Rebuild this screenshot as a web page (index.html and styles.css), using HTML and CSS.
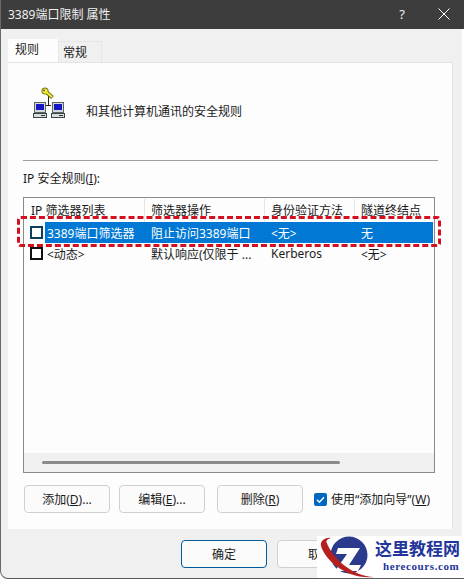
FILE: index.html
```html
<!DOCTYPE html>
<html lang="zh-CN">
<head>
  <meta charset="UTF-8" />
  <title>3389端口限制 属性</title>
  <link rel="stylesheet" href="styles.css">
</head>
<body>
  <div class="dialog">
    <div class="titlebar">
      <span class="title">3389端口限制 属性</span>
      <span class="help">?</span>
      <svg class="close" width="12" height="12" viewBox="0 0 12 12"><path d="M0.5 0.5L11.5 11.5M11.5 0.5L0.5 11.5" stroke="#fff" stroke-width="1" fill="none"/></svg>
    </div>

    <div class="tabs">
      <div class="tab active">规则</div>
      <div class="tab">常规</div>
    </div>

    <div class="panel">
      <div class="intro">
        <svg class="rule-icon" width="32" height="32" viewBox="0 0 32 32" shape-rendering="crispEdges">
          <!-- connector -->
          <path d="M15.5 9v10M13 18.5h5" stroke="#222" stroke-width="1" fill="none"/>
          <!-- key -->
          <g shape-rendering="auto">
            <path d="M12 4L19.5 10.5" stroke="#77720c" stroke-width="4" fill="none"/>
            <circle cx="12" cy="4" r="3.6" fill="#77720c"/>
            <path d="M12 4L19 10" stroke="#f2ea3c" stroke-width="2" fill="none"/>
            <circle cx="12" cy="4" r="2.6" fill="#f2ea3c"/>
            <circle cx="11" cy="3.4" r="0.9" fill="#555"/>
          </g>
          <!-- left computer -->
          <rect x="1" y="15" width="12" height="11" fill="#5a6464"/>
          <rect x="2" y="16" width="10" height="9" fill="#d4dada"/>
          <rect x="3" y="17" width="8" height="6" fill="#1616c4"/>
          <rect x="0" y="26" width="14" height="5" fill="#3c4444"/>
          <rect x="1" y="27" width="12" height="3" fill="#d8dddd"/>
          <rect x="8" y="28" width="4" height="1" fill="#333"/>
          <!-- right computer -->
          <rect x="19" y="15" width="12" height="11" fill="#5a6464"/>
          <rect x="20" y="16" width="10" height="9" fill="#d4dada"/>
          <rect x="21" y="17" width="8" height="6" fill="#1616c4"/>
          <rect x="18" y="26" width="14" height="5" fill="#3c4444"/>
          <rect x="19" y="27" width="12" height="3" fill="#d8dddd"/>
          <rect x="26" y="28" width="4" height="1" fill="#333"/>
        </svg>
        <span class="intro-text">和其他计算机通讯的安全规则</span>
      </div>

      <div class="separator"></div>

      <div class="list-label">IP 安全规则(<u>I</u>):</div>

      <div class="list">
        <div class="list-row list-head">
          <div class="cell">IP 筛选器列表</div>
          <div class="cell">筛选器操作</div>
          <div class="cell">身份验证方法</div>
          <div class="cell">隧道终结点</div>
        </div>
        <div class="list-row rule selected">
          <span class="box"></span>
          <div class="cell-group">
            <div class="cell first">3389端口筛选器</div>
            <div class="cell">阻止访问3389端口</div>
            <div class="cell">&lt;无&gt;</div>
            <div class="cell">无</div>
          </div>
        </div>
        <div class="list-row rule">
          <span class="box"></span>
          <div class="cell-group">
            <div class="cell first">&lt;动态&gt;</div>
            <div class="cell">默认响应(仅限于 ...</div>
            <div class="cell">Kerberos</div>
            <div class="cell">&lt;无&gt;</div>
          </div>
        </div>
        <div class="list-space"></div>
        <div class="scrollbar"><div class="thumb"></div></div>
        <div class="highlight"></div>
      </div>

      <div class="actions">
        <button class="btn">添加(<u>D</u>)...</button>
        <button class="btn">编辑(<u>E</u>)...</button>
        <button class="btn">删除(<u>R</u>)</button>
        <label class="wizard">
          <span class="check">
            <svg width="13" height="13" viewBox="0 0 13 13"><path d="M3 6.8L5.4 9.2L10 4.2" stroke="#fff" stroke-width="1.4" fill="none"/></svg>
          </span>
          使用“添加向导”(<u>W</u>)
        </label>
      </div>
    </div>

    <div class="footer">
      <button class="btn primary">确定</button>
      <button class="btn">取消</button>
    </div>

    <div class="watermark">
      <svg class="wm-logo" width="58" height="43" viewBox="0 0 58 43">
        <circle cx="32" cy="19" r="18.5" fill="#2b3a8c"/>
        <path d="M21 12H43L32 29H44L41 35H18L30 18H19z" fill="#fff"/>
        <path d="M4 10C8 24 30 44 57 41C36 40 16 24 9 5z" fill="#b5201f"/>
        <path d="M4 10C3 5 8 1 14 2C10 3 8 6 9 9z" fill="#b5201f"/>
      </svg>
      <div class="wm-text">
        <div class="wm-name">这里教程网</div>
        <div class="wm-url">herecours.com</div>
      </div>
    </div>
  </div>
</body>
</html>
```

FILE: styles.css
```css
html, body {
  margin: 0;
  padding: 0;
  background-color: #fff;
}
body {
  font-family: "Noto Sans", "Noto Sans CJK SC", sans-serif;
  font-size: 12px;
  color: #1a1a1a;
  width: 464px;
  height: 579px;
  overflow: hidden;
}
.dialog {
  position: relative;
  box-sizing: border-box;
  width: 464px;
  height: 579px;
  background: linear-gradient(to left, #fff 2px, #f0f0f0 2px);
  border-left: 1px solid #6a6a6a;
  border-bottom: 1px solid #5a5a5a;
  border-bottom-left-radius: 8px;
  overflow: hidden;
}
.titlebar {
  display: flex;
  align-items: center;
  height: 29px;
  padding: 0 14px 2px 7px;
  box-sizing: border-box;
  background-color: #3d3d3d;
  color: #f0f0f0;
}
.title {
  flex: 1;
}
.help {
  margin-right: 33px;
  font-size: 13px;
}
.tabs {
  display: flex;
  align-items: flex-end;
  height: 23px;
  margin: 10px 0 0 7px;
}
.tab {
  width: 44px;
  height: 21px;
  line-height: 21px;
  padding-right: 10px;
  text-align: center;
  background-color: #f0f0f0;
  border: 1px solid #e6e6e6;
  border-bottom: none;
  box-sizing: border-box;
}
.tab.active {
  width: 50px;
  height: 23px;
  line-height: 19px;
  background-color: #fdfdfd;
  border-color: #fdfdfd;
  padding-right: 12px;
}
.panel {
  box-sizing: border-box;
  width: 445px;
  height: 467px;
  margin-left: 7px;
  padding: 0 14px 0 15px;
  background-color: #fdfdfd;
  border-top: 1px solid #e4e4e4;
  border-right: 1px solid #e4e4e4;
}
.intro {
  display: flex;
  align-items: flex-start;
  height: 97px;
  padding: 24px 0 0 10px;
  box-sizing: border-box;
}
.rule-icon {
  flex: none;
}
.intro-text {
  margin: 15px 0 0 21px;
}
.separator {
  height: 1px;
  background-color: #a0a0a0;
}
.list-label {
  margin-top: 9px;
  height: 27px;
  line-height: 18px;
}
.list {
  position: relative;
  display: flex;
  flex-direction: column;
  box-sizing: border-box;
  width: 412px;
  height: 276px;
  background-color: #fdfdfd;
  border: 1px solid #8a8a8a;
}
.list-row {
  display: flex;
  align-items: center;
}
.list-head {
  height: 24px;
  padding-top: 1px;
  box-sizing: border-box;
}
.list-head .cell {
  border-right: 1px solid #e5e5e5;
  line-height: 23px;
  height: 23px;
  padding-top: 0;
}
.cell {
  box-sizing: border-box;
  flex: none;
  padding-left: 6px;
  white-space: nowrap;
  overflow: hidden;
}
.list-head .cell:nth-child(1) { width: 121px; padding-left: 7px; }
.list-head .cell:nth-child(2) { width: 120px; }
.list-head .cell:nth-child(3) { width: 90px; }
.list-head .cell:nth-child(4) { width: 78px; border-right: none; }
.rule {
  height: 21px;
}
.box {
  flex: none;
  box-sizing: border-box;
  width: 13px;
  height: 13px;
  margin-left: 6px;
  border: 2px solid #111;
  background-color: #fff;
}
.selected .box {
  border-color: #0f3f5f;
}
.cell-group {
  display: flex;
  align-items: center;
  flex: 1;
  height: 21px;
  margin: 0 1px 0 2px;
}
.selected .cell-group {
  background-color: #0078d4;
  color: #fff;
}
.cell-group .cell:nth-child(1) { width: 100px; padding-left: 2px; }
.cell-group .cell:nth-child(2) { width: 120px; }
.cell-group .cell:nth-child(3) { width: 90px; }
.cell-group .cell:nth-child(4) { width: 68px; }
.list-space {
  flex: 1;
}
.scrollbar {
  display: flex;
  align-items: center;
  height: 19px;
  padding-left: 18px;
  background-color: #f0f0f0;
}
.thumb {
  width: 298px;
  height: 3px;
  background-color: #8a8a8a;
  border-radius: 2px;
}
/* red dashed annotation drawn over the first row */
.highlight {
  position: absolute;
  left: -7px;
  top: 18px;
  width: 424px;
  height: 31px;
  box-sizing: border-box;
  border: 3px dashed #d40f1e;
  border-radius: 4px;
}
.actions {
  display: flex;
  align-items: center;
  margin-top: 12px;
  padding-left: 1px;
}
.btn {
  box-sizing: border-box;
  width: 86px;
  height: 28px;
  padding: 0;
  font-family: inherit;
  font-size: 12px;
  color: #1a1a1a;
  background-color: #fbfbfb;
  border: 1px solid #d0d0d0;
  border-radius: 4px;
}
.actions .btn {
  margin-right: 9px;
}
.actions .btn:nth-child(3) {
  margin-left: 3px;
  margin-right: 11px;
}
.wizard {
  display: flex;
  align-items: center;
  white-space: nowrap;
}
.check {
  display: block;
  width: 13px;
  height: 13px;
  margin-right: 4px;
  background-color: #0067c0;
  border-radius: 2px;
}
.check svg {
  display: block;
}
.footer {
  display: flex;
  gap: 10px;
  margin-top: 11px;
  padding-left: 180px;
}
.primary {
  border: 1px solid #005a9e;
}
.watermark {
  position: absolute;
  left: 316px;
  top: 536px;
  display: flex;
  width: 147px;
  height: 43px;
  background-color: #fff;
}
.wm-logo {
  flex: none;
}
.wm-text {
  white-space: nowrap;
  margin-top: 1px;
}
.wm-name {
  font-family: "Noto Sans CJK SC", sans-serif;
  font-weight: 700;
  font-size: 17px;
  line-height: 22px;
  color: #23359a;
}
.wm-url {
  margin-left: 8px;
  font-family: "Liberation Serif", serif;
  font-weight: 700;
  font-size: 11px;
  line-height: 14px;
  letter-spacing: 0.6px;
  color: #23359a;
}
```
